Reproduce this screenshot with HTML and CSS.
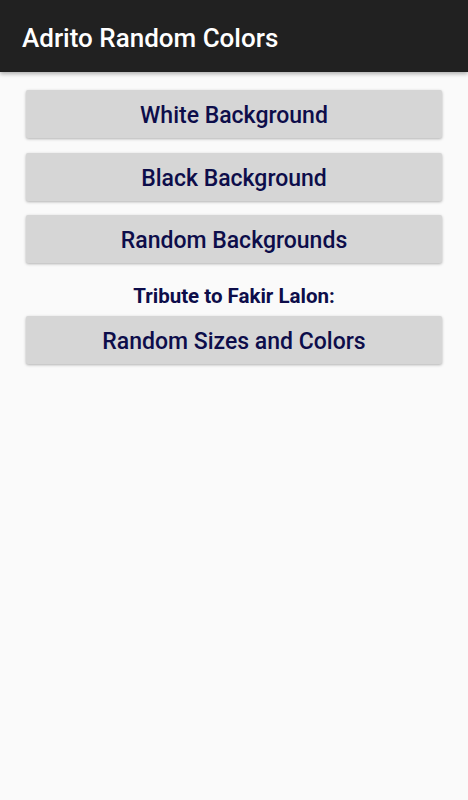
FILE: index.html
```html
<!DOCTYPE html>
<html lang="en">
<head>
    <meta charset="UTF-8">
    <meta name="viewport" content="width=device-width, initial-scale=1.0">
    <title>Adrito Random Colors</title>
    <link rel="stylesheet" href="styles.css">
</head>
<body>
    <div class="toolbar">Adrito Random Colors</div>

    <div class="content">
        <button type="button" class="btn">White Background</button>
        <button type="button" class="btn">Black Background</button>
        <button type="button" class="btn">Random Backgrounds</button>
        <div class="tribute">Tribute to Fakir Lalon:</div>
        <button type="button" class="btn">Random Sizes and Colors</button>
    </div>
</body>
</html>
```

FILE: styles.css
```css
body {
    margin: 0;
    font-family: Roboto, "Liberation Sans", sans-serif;
    background-color: #fafafa;
}

.toolbar {
    background-color: #212121;
    color: #fff;
    height: 72px;
    line-height: 76px;
    padding-left: 22px;
    font-size: 26px;
    font-weight: 500;
    box-shadow: 0 2px 4px rgba(0, 0, 0, 0.3);
}

.content {
    display: flex;
    flex-direction: column;
    padding: 18px 26px;
    gap: 14.5px;
}

.btn {
    height: 48px;
    background-color: #d6d6d6;
    color: #0d0d4a;
    border: none;
    border-radius: 2px;
    box-shadow: 0 1px 3px rgba(0, 0, 0, 0.3);
    font-family: Roboto, "Liberation Sans", sans-serif;
    font-size: 23px;
    font-weight: 500;
    padding: 3px 0 0;
}

.tribute {
    text-align: center;
    color: #0d0d4a;
    font-size: 20.5px;
    font-weight: bold;
    line-height: 24px;
    margin: 6px 0 -6.5px;
}
```
